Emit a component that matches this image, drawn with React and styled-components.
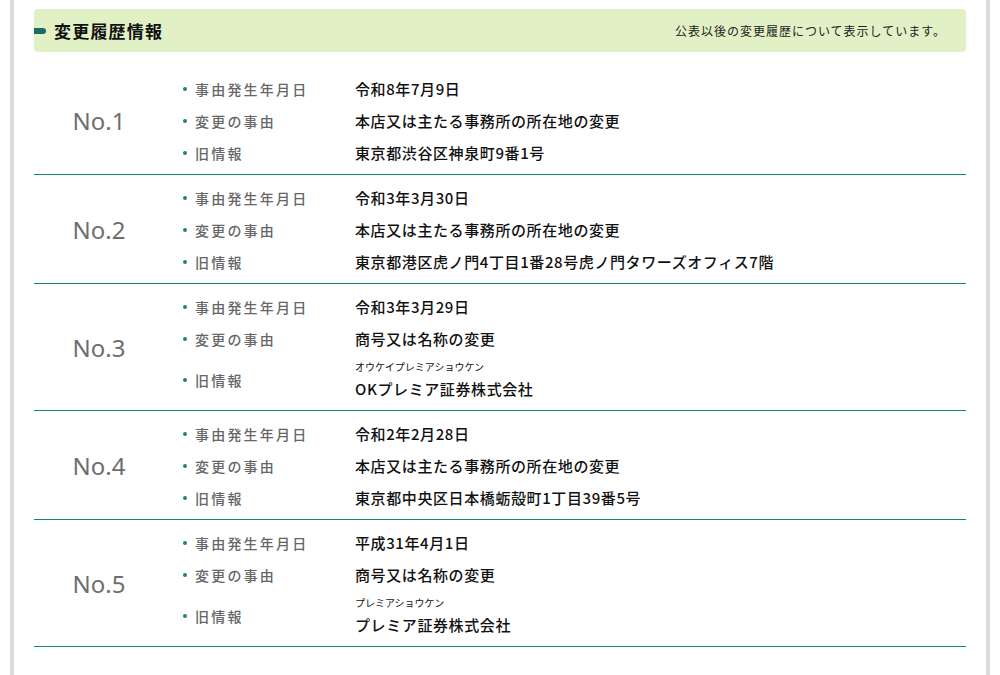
import React from 'react'
import styled, { createGlobalStyle } from 'styled-components'

const GlobalStyle = createGlobalStyle`
  body {
    margin: 0;
    background: #fff;
    font-family: "Noto Sans CJK JP", "Noto Sans", sans-serif;
    color: #111;
  }
`

const Page = styled.div`
  margin-left: 10px;
  width: 932px;
  min-height: 100vh;
  padding: 9px 20px 0;
  border-left: 4px solid #dcdcdc;
  border-right: 4px solid #dcdcdc;
`

const Header = styled.div`
  display: flex;
  align-items: center;
  justify-content: space-between;
  height: 43px;
  background: #e1f1c5;
  border-radius: 4px;
  padding-right: 20px;
`

const Title = styled.h2`
  display: flex;
  align-items: center;
  gap: 8px;
  margin: 0;
  font-size: 17px;
  font-weight: 700;
  line-height: 24px;
  letter-spacing: 1.2px;
  color: #111;
  &::before {
    content: "";
    width: 12px;
    height: 6px;
    border-radius: 0 3px 3px 0;
    background: #1c6b68;
  }
`

const Note = styled.p`
  margin: 0;
  font-size: 12px;
  line-height: 18px;
  letter-spacing: 1px;
  color: #222;
`

const History = styled.div`
  margin-top: 14px;
`

const Entry = styled.div`
  display: flex;
  align-items: center;
  padding: 7px 0 5px;
  border-bottom: 1px solid #17896b;
`

const EntryNo = styled.div`
  width: 146px;
  padding-right: 16px;
  box-sizing: border-box;
  text-align: center;
  font-family: "Noto Sans", sans-serif;
  font-size: 24px;
  line-height: 32px;
  color: #6e6e6e;
`

const Items = styled.dl`
  flex: 1;
  margin: 0;
`

const Item = styled.div`
  display: grid;
  grid-template-columns: 175px 1fr;
  align-items: center;
  height: ${(props) => (props.tall ? '50px' : '32px')};
`

const Label = styled.dt`
  display: flex;
  align-items: center;
  gap: 8px;
  padding-left: 3px;
  font-size: 14px;
  font-weight: 500;
  line-height: 20px;
  letter-spacing: 2.2px;
  color: #666;
  &::before {
    content: "";
    width: 4px;
    height: 4px;
    border-radius: 50%;
    background: #17896b;
  }
`

const Value = styled.dd`
  margin: 0;
  padding: ${(props) => (props.tall ? '4px 0 2px' : '0')};
  font-size: 15px;
  font-weight: 500;
  letter-spacing: 0.6px;
  line-height: ${(props) => (props.tall ? '28px' : '32px')};
`

const Kana = styled.span`
  display: block;
  font-size: 10px;
  font-weight: 400;
  letter-spacing: 0;
  line-height: 16px;
`

const entries = [
  { no: 1, date: '令和8年7月9日', reason: '本店又は主たる事務所の所在地の変更', old: '東京都渋谷区神泉町9番1号' },
  { no: 2, date: '令和3年3月30日', reason: '本店又は主たる事務所の所在地の変更', old: '東京都港区虎ノ門4丁目1番28号虎ノ門タワーズオフィス7階' },
  { no: 3, date: '令和3年3月29日', reason: '商号又は名称の変更', kana: 'オウケイプレミアショウケン', old: 'OKプレミア証券株式会社' },
  { no: 4, date: '令和2年2月28日', reason: '本店又は主たる事務所の所在地の変更', old: '東京都中央区日本橋蛎殻町1丁目39番5号' },
  { no: 5, date: '平成31年4月1日', reason: '商号又は名称の変更', kana: 'プレミアショウケン', old: 'プレミア証券株式会社' },
]

export default function App() {
  return (
    <Page>
      <GlobalStyle />
      <Header>
        <Title>変更履歴情報</Title>
        <Note>公表以後の変更履歴について表示しています。</Note>
      </Header>
      <History>
        {entries.map((e) => (
          <Entry key={e.no}>
            <EntryNo>No.{e.no}</EntryNo>
            <Items>
              <Item>
                <Label>事由発生年月日</Label>
                <Value>{e.date}</Value>
              </Item>
              <Item>
                <Label>変更の事由</Label>
                <Value>{e.reason}</Value>
              </Item>
              <Item tall={!!e.kana}>
                <Label>旧情報</Label>
                <Value tall={!!e.kana}>
                  {e.kana && <Kana>{e.kana}</Kana>}
                  {e.old}
                </Value>
              </Item>
            </Items>
          </Entry>
        ))}
      </History>
    </Page>
  )
}
